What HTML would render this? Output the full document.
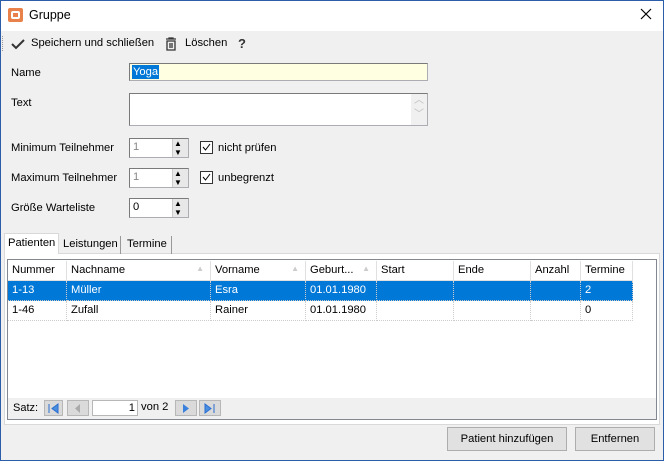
<!DOCTYPE html>
<html><head><meta charset="utf-8"><style>
*{box-sizing:border-box;margin:0;padding:0}
body{width:664px;height:461px;overflow:hidden;background:#f0f0f0;font-family:"Liberation Sans",sans-serif;font-size:11.2px;color:#000;position:relative}
.a{position:absolute}
.win{left:0;top:0;width:664px;height:461px;border:1px solid #2b5ea8;border-top:none}
.title{left:1px;top:0;width:662px;height:31px;background:#fff;border-top:1px solid #2b5ea8}
.inp{background:#fff;border:1px solid #abadb3;border-top-color:#7a7a7a;border-left-color:#7a7a7a}
.spin{width:16px;border-left:1px solid #ccc;background:#e8e8e8}
.cb{width:13px;height:13px;border:1px solid #333;background:#fff}
.th{top:261px;height:20px;background:#fff;border-right:1px solid #e0e0e0;padding:3px 4px;white-space:nowrap}
.td{height:20px;padding:3px 4px;border-right:1px dotted #ccc;border-bottom:1px dotted #ccc;white-space:nowrap}
.sel{background:#0078d7;color:#fff}
.btn{background:#e1e1e1;border:1px solid #adadad;text-align:center;line-height:22px}
.nb{width:20px;height:16px;top:400px;background:#dadada;border:1px solid #b7b7b7}
</style></head><body>
<div class="a title"></div>
<div class="a" style="left:8px;top:8px;width:15px;height:14px;background:#e8824a;border-radius:2px"></div>
<div class="a" style="left:11px;top:11px;width:9px;height:8px;border:2px solid #fff;border-radius:2px"></div>
<div class="a" style="left:29px;top:8px;font-size:12.5px">Gruppe</div>
<svg class="a" style="left:640px;top:8px" width="12" height="12"><path d="M1 1L11 11M11 1L1 11" stroke="#000" stroke-width="1.2"/></svg>
<div class="a" style="left:2px;top:36px;width:2px;height:15px;border-left:1px dotted #999"></div>
<svg class="a" style="left:11px;top:38px" width="14" height="12"><path d="M1 6L5 10L13 2" stroke="#333" stroke-width="2" fill="none"/></svg>
<div class="a" style="left:31px;top:37px">Speichern und schließen</div>
<svg class="a" style="left:165px;top:37px" width="12" height="14"><path d="M1 2H11M4 2V1H8V2M2 4H10V13H2Z M5 6V11M7 6V11" stroke="#333" stroke-width="1.3" fill="none"/></svg>
<div class="a" style="left:185px;top:37px">Löschen</div>
<div class="a" style="left:238px;top:36px;font-size:13px;font-weight:bold;color:#333">?</div>

<div class="a" style="left:11px;top:67px">Name</div>
<div class="a inp" style="left:129px;top:63px;width:299px;height:18px;background:#ffffe1"></div>
<div class="a sel" style="left:132px;top:65px;padding:0 1px;height:14px;line-height:14px">Yoga</div>
<div class="a" style="left:11px;top:97px">Text</div>
<div class="a inp" style="left:129px;top:93px;width:299px;height:33px"></div>
<div class="a" style="left:411px;top:94px;width:16px;height:31px;background:#f0f0f0;color:#bbb;font-size:10px;text-align:center;line-height:14px">︿<br>﹀</div>

<div class="a" style="left:11px;top:142px">Minimum Teilnehmer</div>
<div class="a inp" style="left:129px;top:138px;width:60px;height:20px;color:#888;padding:2px 3px">1</div>
<div class="a spin" style="left:172px;top:139px;height:18px"></div>
<div class="a" style="left:174px;top:139px;font-size:8px;line-height:9px">▲<br>▼</div>
<div class="a cb" style="left:200px;top:141px"></div><svg class="a" style="left:201px;top:142px" width="11" height="11"><path d="M2 5L4.5 8L9 2" stroke="#000" fill="none"/></svg>
<div class="a" style="left:218px;top:142px">nicht prüfen</div>

<div class="a" style="left:11px;top:172px">Maximum Teilnehmer</div>
<div class="a inp" style="left:129px;top:168px;width:60px;height:20px;color:#888;padding:2px 3px">1</div>
<div class="a spin" style="left:172px;top:169px;height:18px"></div>
<div class="a" style="left:174px;top:169px;font-size:8px;line-height:9px">▲<br>▼</div>
<div class="a cb" style="left:200px;top:171px"></div><svg class="a" style="left:201px;top:172px" width="11" height="11"><path d="M2 5L4.5 8L9 2" stroke="#000" fill="none"/></svg>
<div class="a" style="left:218px;top:172px">unbegrenzt</div>

<div class="a" style="left:11px;top:202px">Größe Warteliste</div>
<div class="a inp" style="left:129px;top:198px;width:60px;height:20px;padding:2px 3px">0</div>
<div class="a spin" style="left:172px;top:199px;height:18px"></div>
<div class="a" style="left:174px;top:199px;font-size:8px;line-height:9px">▲<br>▼</div>

<div class="a" style="left:4px;top:253px;width:656px;height:172px;background:#fff;border:1px solid #d9d9d9"></div>
<div class="a" style="left:4px;top:233px;width:55px;height:21px;background:#fff;border:1px solid #d9d9d9;border-bottom:none;padding:3px 3px">Patienten</div>
<div class="a" style="left:59px;top:236px;width:62px;height:18px;border-right:1px solid #999;padding:2px 4px">Leistungen</div>
<div class="a" style="left:122px;top:236px;width:50px;height:18px;border-right:1px solid #999;padding:2px 5px">Termine</div>

<div class="a" style="left:7px;top:259px;width:650px;height:161px;border:1px solid #828790;background:#fff"></div>
<div class="a th" style="left:8px;width:59px">Nummer</div>
<div class="a th" style="left:67px;width:144px">Nachname<span style="position:absolute;right:6px;color:#ccc;font-size:8px">▲</span></div>
<div class="a th" style="left:211px;width:95px">Vorname<span style="position:absolute;right:6px;color:#ccc;font-size:8px">▲</span></div>
<div class="a th" style="left:306px;width:71px">Geburt...<span style="position:absolute;right:6px;color:#ccc;font-size:8px">▲</span></div>
<div class="a th" style="left:377px;width:77px">Start</div>
<div class="a th" style="left:454px;width:77px">Ende</div>
<div class="a th" style="left:531px;width:50px">Anzahl</div>
<div class="a th" style="left:581px;width:52px">Termine</div>
<div class="a" style="left:8px;top:280px;width:625px;border-top:1px solid #e0e0e0"></div>

<div class="a" style="left:8px;top:281px;width:625px;height:20px;display:flex">
<div class="td sel" style="width:59px">1-13</div><div class="td sel" style="width:144px">Müller</div><div class="td sel" style="width:95px">Esra</div><div class="td sel" style="width:71px">01.01.1980</div><div class="td sel" style="width:77px"></div><div class="td sel" style="width:77px"></div><div class="td sel" style="width:50px"></div><div class="td sel" style="width:52px">2</div></div>
<div class="a" style="left:8px;top:301px;width:625px;height:20px;display:flex">
<div class="td" style="width:59px">1-46</div><div class="td" style="width:144px">Zufall</div><div class="td" style="width:95px">Rainer</div><div class="td" style="width:71px">01.01.1980</div><div class="td" style="width:77px"></div><div class="td" style="width:77px"></div><div class="td" style="width:50px"></div><div class="td" style="width:52px">0</div></div>

<div class="a" style="left:8px;top:398px;width:648px;height:21px;background:#f0f0f0"></div>
<div class="a" style="left:13px;top:402px;font-size:11px">Satz:</div>
<div class="a nb" style="left:44px;width:19px"></div><svg class="a" style="left:48px;top:403px" width="12" height="11"><path d="M1 1V10M10 1L4 5.5L10 10Z" stroke="#2a6fd0" fill="#4a8ee0"/></svg>
<div class="a nb" style="left:67px;width:22px"></div><svg class="a" style="left:73px;top:403px" width="10" height="11"><path d="M7 1L2 5.5L7 10Z" fill="#aaa"/></svg>
<div class="a" style="left:92px;top:400px;width:46px;height:16px;background:#fff;border:1px solid #b7b7b7;text-align:right;padding-right:2px;line-height:14px">1</div>
<div class="a" style="left:141px;top:401px">von&nbsp;2</div>
<div class="a nb" style="left:175px;width:22px"></div><svg class="a" style="left:181px;top:403px" width="10" height="11"><path d="M2 1L8 5.5L2 10Z" fill="#3a80dd"/></svg>
<div class="a nb" style="left:199px;width:22px"></div><svg class="a" style="left:204px;top:403px" width="12" height="11"><path d="M1 1L7 5.5L1 10Z M10 1V10" stroke="#2a6fd0" fill="#4a8ee0"/></svg>

<div class="a btn" style="left:447px;top:427px;width:120px;height:24px">Patient hinzufügen</div>
<div class="a btn" style="left:575px;top:427px;width:80px;height:24px">Entfernen</div>
<div class="a win"></div>
</body></html>
